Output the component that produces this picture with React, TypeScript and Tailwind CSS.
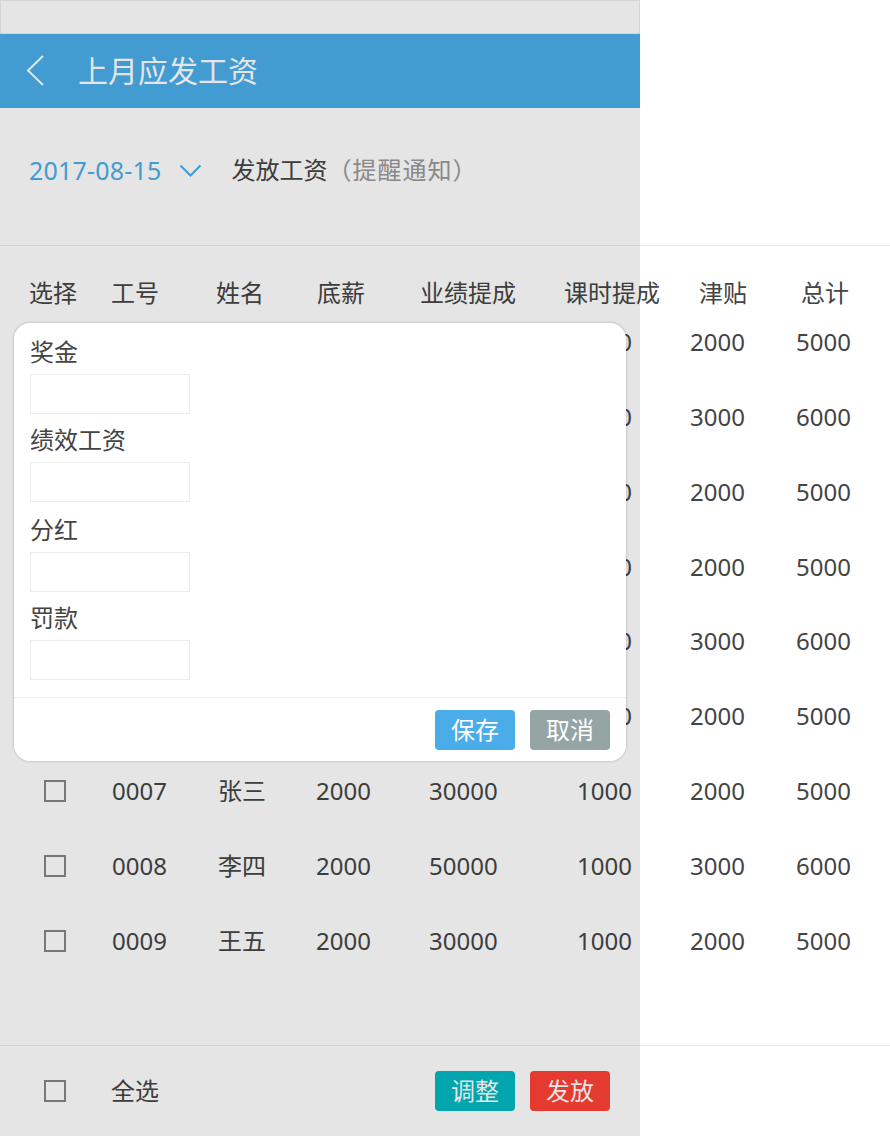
import React from "react";

const rows = [
  ["0001", "张三", "2000", "30000", "1000", "2000", "5000"],
  ["0002", "李四", "2000", "50000", "1000", "3000", "6000"],
  ["0003", "王五", "2000", "30000", "1000", "2000", "5000"],
  ["0004", "张三", "2000", "30000", "1000", "2000", "5000"],
  ["0005", "李四", "2000", "50000", "1000", "3000", "6000"],
  ["0006", "王五", "2000", "30000", "1000", "2000", "5000"],
  ["0007", "张三", "2000", "30000", "1000", "2000", "5000"],
  ["0008", "李四", "2000", "50000", "1000", "3000", "6000"],
  ["0009", "王五", "2000", "30000", "1000", "2000", "5000"],
];

const headers = ["选择", "工号", "姓名", "底薪", "业绩提成", "课时提成", "津贴", "总计"];

function Checkbox() {
  return <div className="w-[22px] h-[22px] border-2 border-[#858585] bg-white" />;
}

function Field({ label, gap }: { label: string; gap: string }) {
  return (
    <div className={gap}>
      <div className="text-[24px] leading-[32px] text-[#444]">{label}</div>
      <div className="mt-[6px] w-[160px] h-[40px] border border-[#ececec] bg-white" />
    </div>
  );
}

export default function App() {
  return (
    <div className="relative w-[890px] h-[1136px] bg-white overflow-hidden flex flex-col text-[#444] font-['Noto_Sans','Noto_Sans_CJK_SC',sans-serif]">
      {/* status bar */}
      <div className="w-[640px] h-[34px] border border-[#ededed] bg-white shrink-0" />
      {/* header */}
      <div className="w-[640px] h-[74px] bg-[#4aade9] flex items-center shrink-0">
        <svg width="20" height="32" viewBox="0 0 20 32" className="ml-[26px]">
          <polyline points="17,1 2,15.5 17,30" fill="none" stroke="#ffffff" strokeWidth="2" />
        </svg>
        <div className="ml-[32px] text-[30px] leading-[40px] text-white">上月应发工资</div>
      </div>
      {/* date row */}
      <div className="h-[138px] border-b border-[#ebebeb] pl-[29px] pt-[46px] shrink-0">
        <div className="flex items-center h-[32px]">
          <span className="text-[25px] leading-[32px] text-[#4aade9] tracking-[0.2px]">2017-08-15</span>
          <svg width="24" height="14" viewBox="0 0 24 14" className="ml-[17px] mt-[1px]">
            <polyline points="1.5,1.5 11.5,11.5 21.5,1.5" fill="none" stroke="#4aade9" strokeWidth="2" />
          </svg>
          <span className="ml-[29px] text-[24px] leading-[32px] text-[#444]">发放工资</span>
          <span className="text-[24px] leading-[32px] text-[#999] tracking-[1px]">（提醒通知）</span>
        </div>
      </div>
      {/* table header */}
      <div className="h-[58.5px] grid grid-cols-[82px_105px_101px_103px_144px_135px_102px_1fr] items-end pl-[29px] shrink-0">
        {headers.map((h) => (
          <div key={h} className="text-[24px] leading-[24px] whitespace-nowrap">{h}</div>
        ))}
      </div>
      {/* rows */}
      {rows.map((r) => (
        <div
          key={r[0]}
          className="h-[74.875px] grid grid-cols-[68px_106px_98px_113px_148px_113px_106px_1fr] items-center pl-[44px] shrink-0"
        >
          <Checkbox />
          {r.map((c, i) => (
            <div key={i} className="text-[24px] leading-[32px] whitespace-nowrap">{c}</div>
          ))}
        </div>
      ))}
      {/* bottom bar */}
      <div className="mt-auto h-[91px] border-t border-[#ebebeb] shrink-0">
        <div className="w-[640px] h-full flex items-center pl-[44px] pr-[30px]">
          <Checkbox />
          <div className="ml-[45px] text-[24px] leading-[32px]">全选</div>
          <div className="ml-auto flex gap-[15px]">
            <div className="w-[80px] h-[40px] rounded-[4px] bg-[#00b8c1] text-white text-[24px] leading-[40px] text-center">调整</div>
            <div className="w-[80px] h-[40px] rounded-[4px] bg-[#ff4136] text-white text-[24px] leading-[40px] text-center">发放</div>
          </div>
        </div>
      </div>

      {/* mask */}
      <div className="absolute left-0 top-0 w-[640px] h-full bg-black/10" />

      {/* modal */}
      <div className="absolute left-[14px] top-[323px] w-[612px] bg-white rounded-[16px] shadow-[0_0_2px_1px_rgba(0,0,0,0.12)]">
        <div className="px-[16px] pt-[13px]">
          <Field label="奖金" gap="" />
          <Field label="绩效工资" gap="mt-[10px]" />
          <Field label="分红" gap="mt-[12px]" />
          <Field label="罚款" gap="mt-[10px]" />
        </div>
        <div className="mt-[17px] border-t border-[#ececec]" />
        <div className="flex justify-end gap-[15px] pt-[12px] pb-[11px] pr-[16px]">
          <div className="w-[80px] h-[40px] rounded-[4px] bg-[#4aade9] text-white text-[24px] leading-[40px] text-center">保存</div>
          <div className="w-[80px] h-[40px] rounded-[4px] bg-[#95a5a6] text-white text-[24px] leading-[40px] text-center">取消</div>
        </div>
      </div>
    </div>
  );
}
